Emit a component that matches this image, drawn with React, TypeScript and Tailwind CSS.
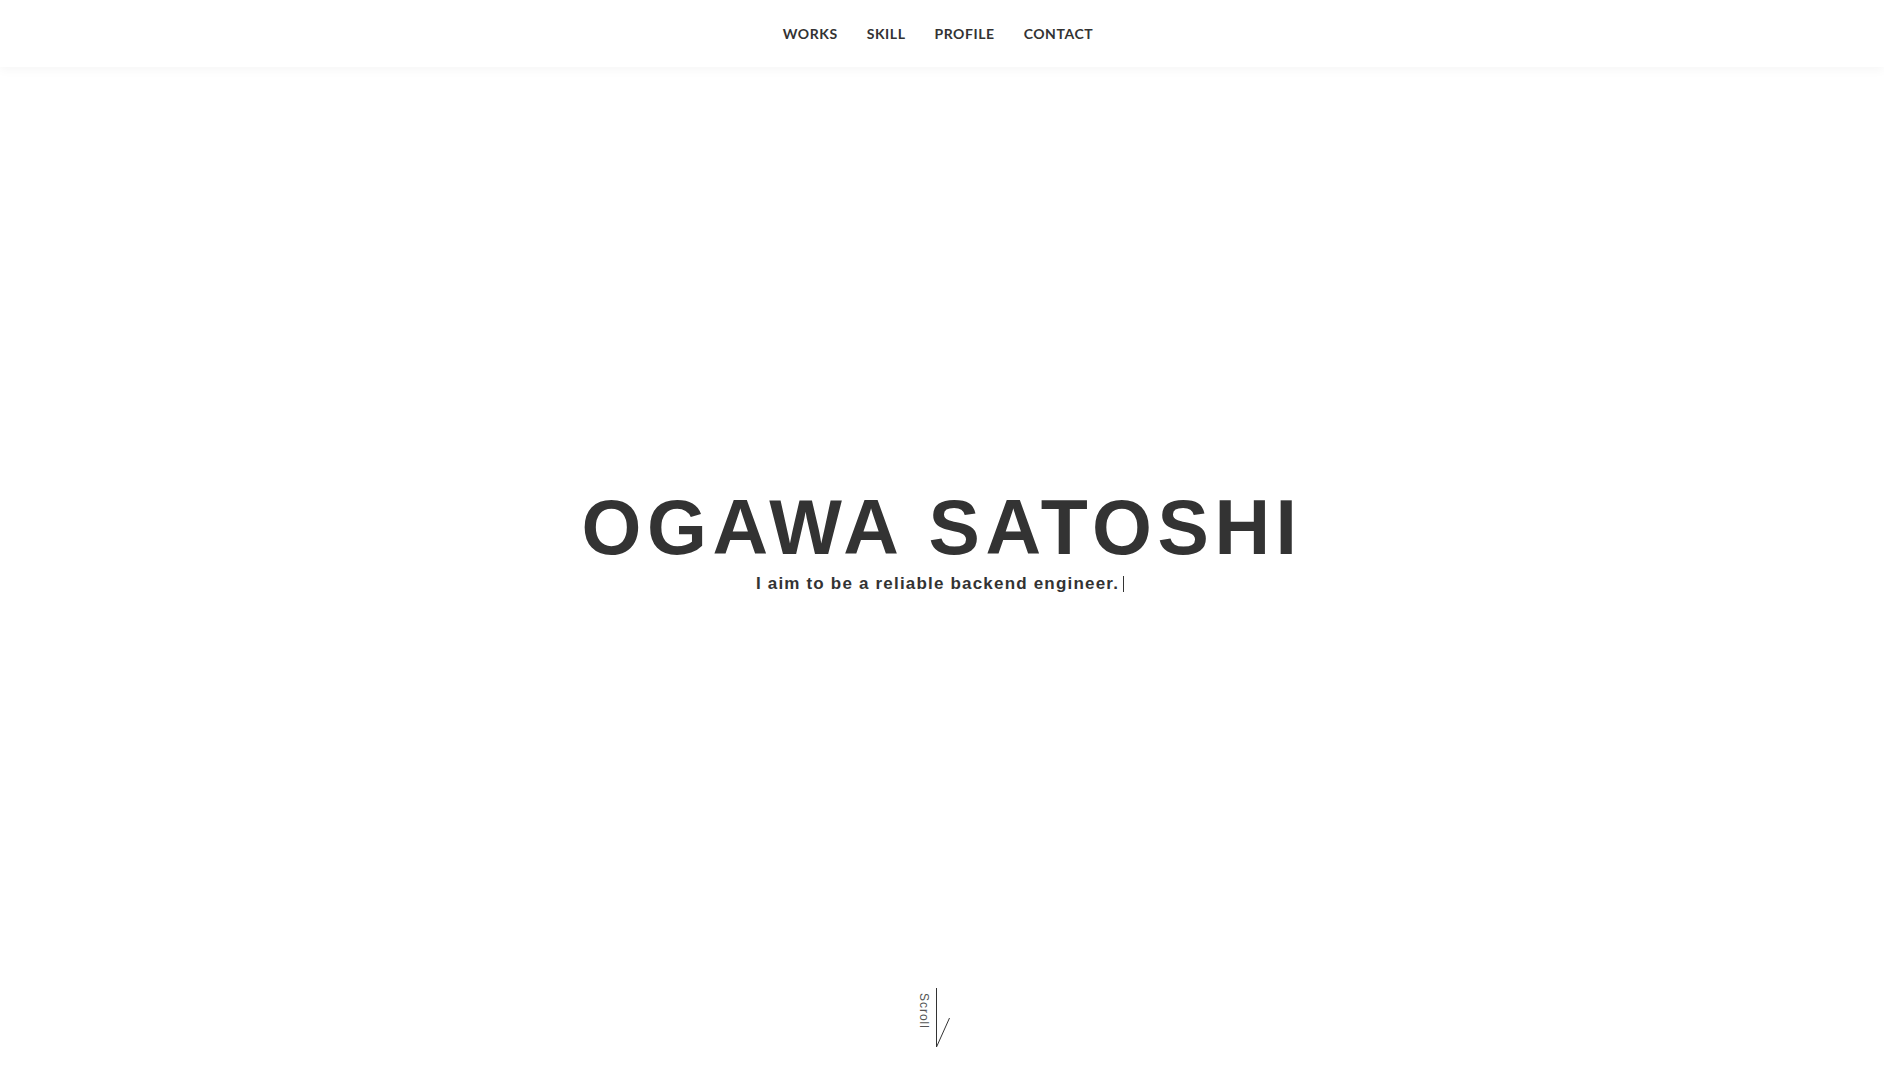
const navItems = ["WORKS", "SKILL", "PROFILE", "CONTACT"];

function Header() {
  return (
    <header className="relative z-10 flex h-[67px] items-center justify-center bg-white shadow-[0_3px_10px_rgba(0,0,0,0.04)]">
      <nav className="flex gap-[29px] pr-[8px]">
        {navItems.map((item) => (
          <a
            key={item}
            href="#"
            className="font-['Lato',sans-serif] text-[14px] font-bold tracking-[0.04em] text-[#333]"
          >
            {item}
          </a>
        ))}
      </nav>
    </header>
  );
}

function ScrollHint() {
  return (
    <div className="flex items-start justify-center pb-[32px] pr-[16px]">
      <span className="mt-[5px] mr-[6px] w-[12px] font-['Liberation_Sans',sans-serif] text-[12px] leading-[12px] tracking-[0.08em] text-[#555] [writing-mode:vertical-rl]">
        Scroll
      </span>
      <svg width="14" height="60" viewBox="0 0 14 60" className="block">
        <line x1="0.5" y1="0" x2="0.5" y2="59" stroke="#333" strokeWidth="1" />
        <line x1="0.5" y1="59" x2="13.5" y2="30" stroke="#333" strokeWidth="1" />
      </svg>
    </div>
  );
}

export default function App() {
  return (
    <main className="flex h-[1080px] flex-col bg-white">
      <Header />
      <section className="flex flex-1 flex-col items-center justify-center pt-[22px]">
        <h1 className="font-['Liberation_Sans',sans-serif] text-[77px] font-bold leading-[92px] tracking-[0.072em] text-[#333]">
          OGAWA SATOSHI
        </h1>
        <p className="-mt-[2px] flex items-center pr-[4px] font-['Liberation_Sans',sans-serif] text-[17px] font-bold tracking-[0.07em] text-[#333]">
          I aim to be a reliable backend engineer.
          <span className="ml-[4px] inline-block h-[16px] w-px bg-[#333]" />
        </p>
      </section>
      <ScrollHint />
    </main>
  );
}
